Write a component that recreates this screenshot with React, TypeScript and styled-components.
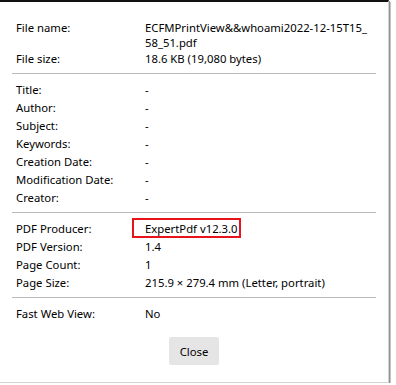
import styled, { createGlobalStyle } from "styled-components";

const GlobalStyle = createGlobalStyle`
  html, body {
    margin: 0;
    padding: 0;
    background: #ffffff;
  }
  body {
    font-family: "Noto Sans", "Open Sans", sans-serif;
    font-size: 11.3px;
    color: #000;
  }
`;

const Dialog = styled.div`
  box-sizing: border-box;
  width: 389px;
  height: 383px;
  background: #fff;
  border-top: 2px solid #111;
  border-right: 1px solid #d4d4d4;
  border-bottom: 1px solid #d4d4d4;
  box-shadow: 1px 1px 0 #8f8f8f, 2px 2px 0 #c4c4c4;
  padding-top: 10px;
  display: flex;
  flex-direction: column;
`;

const Section = styled.div<{ $last?: boolean }>`
  margin: 0 12px;
  padding: 8px 4px 7px;
  border-bottom: ${(p) => (p.$last ? "none" : "1px solid #b9b9b9")};
`;

const Grid = styled.div<{ $gap: number }>`
  display: grid;
  grid-template-columns: 129px 1fr;
  row-gap: ${(p) => p.$gap}px;
  line-height: 15px;
`;

const Label = styled.div`
  white-space: nowrap;
`;

const Value = styled.div`
  padding-right: 8px;
`;

const NoBreak = styled.span`
  white-space: nowrap;
`;

const Highlight = styled.span`
  position: relative;

  &::before {
    content: "";
    position: absolute;
    top: -3px;
    bottom: -2px;
    left: -13px;
    right: -3px;
    border: 2px solid #e8141b;
  }
`;

const Footer = styled.div`
  display: flex;
  justify-content: center;
  padding-top: 9px;
`;

const Button = styled.button`
  width: 50px;
  height: 28px;
  border: none;
  border-radius: 2px;
  background: #e5e5e5;
  font-family: inherit;
  font-size: 11.3px;
  color: #000;
  padding: 0;
`;

type Item = { label: string; value: React.ReactNode };

const fileInfo: Item[] = [
  {
    label: "File name:",
    value: (
      <>
        <NoBreak>ECFMPrintView&amp;&amp;whoami2022-12-15T15_</NoBreak>
        <wbr />
        <NoBreak>58_51.pdf</NoBreak>
      </>
    ),
  },
  { label: "File size:", value: "18.6 KB (19,080 bytes)" },
];

const docInfo: Item[] = [
  { label: "Title:", value: "-" },
  { label: "Author:", value: "-" },
  { label: "Subject:", value: "-" },
  { label: "Keywords:", value: "-" },
  { label: "Creation Date:", value: "-" },
  { label: "Modification Date:", value: "-" },
  { label: "Creator:", value: "-" },
];

const pdfInfo: Item[] = [
  { label: "PDF Producer:", value: <Highlight>ExpertPdf v12.3.0</Highlight> },
  { label: "PDF Version:", value: "1.4" },
  { label: "Page Count:", value: "1" },
  { label: "Page Size:", value: "215.9 × 279.4 mm (Letter, portrait)" },
];

const webInfo: Item[] = [{ label: "Fast Web View:", value: "No" }];

const InfoSection = ({ items, gap = 3, last }: { items: Item[]; gap?: number; last?: boolean }) => (
  <Section $last={last}>
    <Grid $gap={gap}>
      {items.map((it) => (
        <>
          <Label key={it.label}>{it.label}</Label>
          <Value>{it.value}</Value>
        </>
      ))}
    </Grid>
  </Section>
);

export default function App() {
  return (
    <>
      <GlobalStyle />
      <Dialog>
        <InfoSection items={fileInfo} gap={1} />
        <InfoSection items={docInfo} />
        <InfoSection items={pdfInfo} />
        <InfoSection items={webInfo} last />
        <Footer>
          <Button>Close</Button>
        </Footer>
      </Dialog>
    </>
  );
}
